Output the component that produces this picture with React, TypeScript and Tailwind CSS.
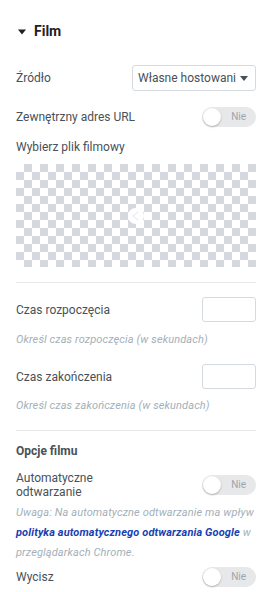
// panel: Elementor-style video controls section
import React from "react";

function Toggle() {
  return (
    <div className="relative flex h-[20px] w-[54px] shrink-0 items-center rounded-full bg-[#e6e8ea] pr-[10px]">
      <span className="absolute left-[1px] top-[1px] h-[18px] w-[18px] rounded-full bg-white shadow-[0_1px_2px_rgba(0,0,0,0.25)]" />
      <span className="ml-auto text-[10px] leading-none text-[#9da5ae]">Nie</span>
    </div>
  );
}

function Row({ label, children, className = "" }: { label: React.ReactNode; children: React.ReactNode; className?: string }) {
  return (
    <div className={`flex items-center justify-between ${className}`}>
      <div className="text-[12px] leading-[14px] text-[#495157]">{label}</div>
      {children}
    </div>
  );
}

function Help({ children, className = "" }: { children: React.ReactNode; className?: string }) {
  return (
    <p className={`text-[11px] italic leading-[20px] tracking-[0.12px] text-[#a4afb7] ${className}`}>{children}</p>
  );
}

export default function App() {
  return (
    <div
      className="min-h-[592px] w-[276px] bg-white pl-4 pr-5"
      style={{ fontFamily: "Roboto, 'Noto Sans', sans-serif" }}
    >
      <div className="flex h-[62px] items-center gap-[8px] pl-[2px] pt-[1px]">
        <svg width="8" height="6" viewBox="0 0 8 6" aria-hidden>
          <path d="M0 0.5h8L4 5.5z" fill="#1f2124" />
        </svg>
        <span className="text-[14px] font-bold text-[#1f2124]">Film</span>
      </div>

      <Row label="Źródło" className="mt-[3px] h-[26px]">
        <div className="flex h-[26px] w-[124px] items-center justify-between rounded-[3px] border border-[#d5dadf] pl-[5px] pr-[7px]">
          <span className="w-[98px] overflow-hidden whitespace-nowrap text-[12px] text-[#495157]">Własne hostowanie</span>
          <svg width="8" height="5" viewBox="0 0 8 5" aria-hidden className="shrink-0">
            <path d="M0 0h8L4 5z" fill="#495157" />
          </svg>
        </div>
      </Row>

      <Row label="Zewnętrzny adres URL" className="mt-[16px] h-[20px]">
        <Toggle />
      </Row>

      <div className="mt-[13px] text-[12px] leading-[14px] text-[#495157]">Wybierz plik filmowy</div>

      <div className="mt-[10px] flex h-[103px] items-center justify-center bg-[repeating-conic-gradient(#d5d8dc_0_25%,#ffffff_0_50%)] bg-[length:16px_16px]">
        <svg width="18" height="18" viewBox="0 0 18 18" aria-hidden>
          <circle cx="9" cy="9" r="8" fill="#fff" />
          <path d="M11 5l-5 4 5 4" fill="none" stroke="#eceef0" strokeWidth="1.5" />
        </svg>
      </div>

      <div className="mt-[15px] border-t border-[#e6e9ec]" />

      <Row label="Czas rozpoczęcia" className="mt-[14px] h-[25px]">
        <div className="h-[25px] w-[54px] rounded-[3px] border border-[#d5dadf]" />
      </Row>
      <Help className="mt-[8px]">Określ czas rozpoczęcia (w sekundach)</Help>

      <Row label="Czas zakończenia" className="mt-[14px] h-[25px]">
        <div className="h-[25px] w-[54px] rounded-[3px] border border-[#d5dadf]" />
      </Row>
      <Help className="mt-[7px]">Określ czas zakończenia (w sekundach)</Help>

      <div className="mt-[14px] border-t border-[#e6e9ec]" />

      <div className="mt-[13px] text-[12px] font-bold leading-[14px] text-[#495157]">Opcje filmu</div>

      <Row label={<>Automatyczne<br />odtwarzanie</>} className="mt-[13px] h-[28px]">
        <Toggle />
      </Row>

      <Help className="mt-[4px]">
        Uwaga: Na automatyczne odtwarzanie ma wpływ{" "}
        <a href="#" className="font-bold text-[#1a3fb0]">polityka automatycznego odtwarzania Google</a> w
        przeglądarkach Chrome.
      </Help>

      <Row label="Wycisz" className="mt-[4px] h-[20px]">
        <Toggle />
      </Row>
    </div>
  );
}
